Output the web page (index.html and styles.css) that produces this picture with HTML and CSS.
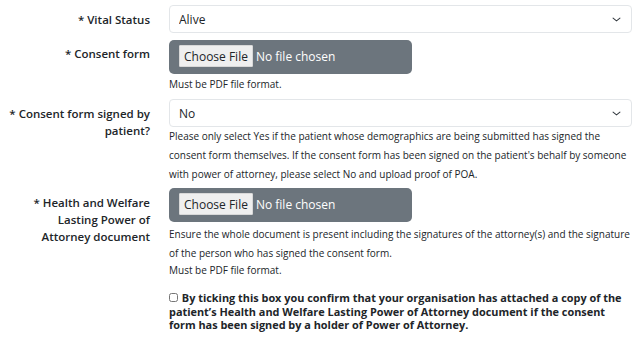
FILE: index.html
```html
<!DOCTYPE html>
<html>
<head>
<title>Consent details</title>
<meta charset="UTF-8">
<meta name="viewport" content="width=device-width, initial-scale=1.0">
<link rel="stylesheet" href="styles.css">
</head>
<body>
<form class="consent-form">
  <div class="form-row">
    <label class="form-label" for="vitalStatus">* Vital Status</label>
    <div class="form-field">
      <select id="vitalStatus" class="form-select">
        <option>Alive</option>
        <option>Deceased</option>
      </select>
    </div>
  </div>

  <div class="form-row">
    <label class="form-label label-file" for="consentForm">* Consent form</label>
    <div class="form-field">
      <input type="file" id="consentForm" class="file-input" accept=".pdf">
      <div class="help-text help-tight">Must be PDF file format.</div>
    </div>
  </div>

  <div class="form-row">
    <label class="form-label" for="signedByPatient">* Consent form signed by patient?</label>
    <div class="form-field">
      <select id="signedByPatient" class="form-select">
        <option>No</option>
        <option>Yes</option>
      </select>
      <div class="help-text">Please only select Yes if the patient whose demographics are being submitted has signed the consent form themselves. If the consent form has been signed on the patient's behalf by someone with power of attorney, please select No and upload proof of POA.</div>
    </div>
  </div>

  <div class="form-row">
    <label class="form-label" for="poaDocument">* Health and Welfare Lasting Power of Attorney&nbsp;document</label>
    <div class="form-field">
      <input type="file" id="poaDocument" class="file-input" accept=".pdf">
      <div class="help-text">Ensure the whole document is present including the signatures of the attorney(s) and the signature of the person who has signed the consent form.</div>
      <div class="help-text help-tight">Must be PDF file format.</div>
    </div>
  </div>

  <div class="form-row">
    <div></div>
    <div class="form-field">
      <label class="check-label">
        <input type="checkbox" class="check-box">
        By ticking this box you confirm that your organisation has attached a copy of the patient’s Health and Welfare Lasting Power of Attorney document if the consent form has been signed by a holder of Power of Attorney.
      </label>
    </div>
  </div>
</form>
</body>
</html>
```

FILE: styles.css
```css
body {
  margin: 0;
  background-color: #fff;
  color: #212529;
  font-family: "Open Sans", "Noto Sans", sans-serif;
  font-size: 12px;
}
.consent-form {
  padding: 5px 8px 0 0;
}
.form-row {
  display: grid;
  grid-template-columns: 150px 1fr;
  column-gap: 19px;
  margin-bottom: 7px;
}
.form-label {
  text-align: right;
  font-weight: 600;
  font-size: 11.5px;
  line-height: 17px;
  padding: 6px 0 0 6px;
}
.label-file {
  padding-top: 5px;
}
.form-select {
  display: block;
  width: 100%;
  height: 28px;
  padding: 0 30px 0 9px;
  font-family: inherit;
  font-size: 12px;
  color: #212529;
  background-color: #fff;
  background-image: url("data:image/svg+xml,%3csvg xmlns='http://www.w3.org/2000/svg' viewBox='0 0 16 16'%3e%3cpath fill='none' stroke='%23343a40' stroke-linecap='round' stroke-linejoin='round' stroke-width='1.5' d='M3 6l5 4 5-4'/%3e%3c/svg%3e");
  background-repeat: no-repeat;
  background-position: right 9px center;
  background-size: 11px 11px;
  border: 1px solid #e3e6e9;
  border-radius: 4px;
  appearance: none;
}
.file-input {
  display: block;
  box-sizing: border-box;
  width: 243px;
  height: 34px;
  padding: 5px 10px;
  font-family: inherit;
  font-size: 12px;
  color: #fff;
  background-color: #6c757d;
  border-radius: 5px;
}
.file-input::file-selector-button {
  height: 22px;
  padding: 0 4px;
  margin-right: 3px;
  font-family: inherit;
  font-size: 12px;
  color: #212529;
  background-color: #efefef;
  border: 1px solid #d8d8d8;
  border-radius: 1px;
}
.help-text {
  font-size: 10px;
  line-height: 19px;
  margin-top: 0;
  margin-bottom: -3px;
}
.file-input + .help-text {
  margin-top: 3px;
}
.help-tight {
  line-height: 16px;
  margin-bottom: 0;
}
.file-input + .help-tight {
  margin-top: 2px;
}
.help-text + .help-tight {
  margin-top: 2px;
}
.check-label {
  display: block;
  font-weight: 700;
  font-size: 10.9px;
  line-height: 13.5px;
  margin-top: 6px;
}
.check-box {
  width: 9px;
  height: 9px;
  margin: 0 1px 0 0;
  vertical-align: 0;
}
```
